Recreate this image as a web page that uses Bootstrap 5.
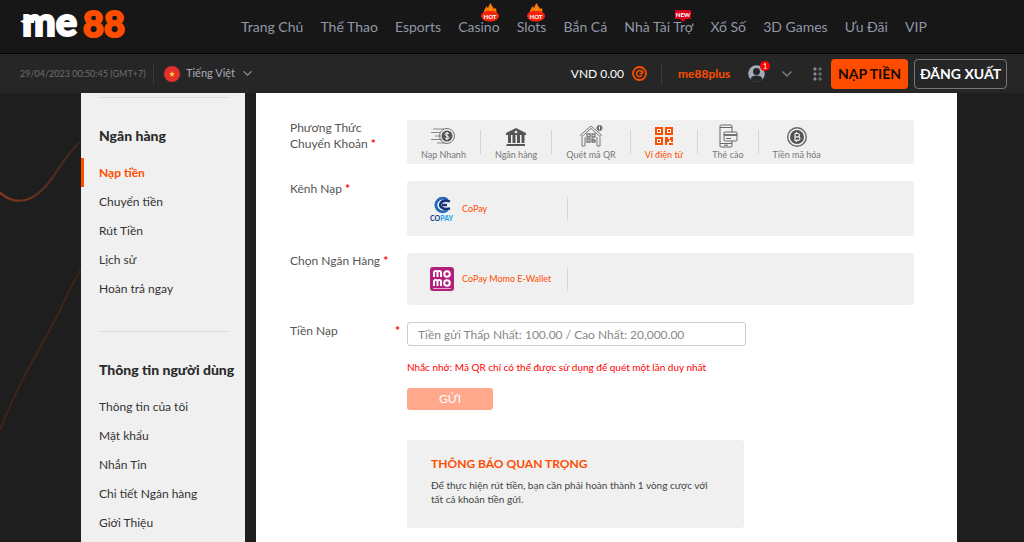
<!DOCTYPE html>
<html lang="vi">
<head>
<meta charset="utf-8">
<meta name="viewport" content="width=device-width, initial-scale=1">
<title>me88 – Nạp tiền</title>
<link href="https://cdn.jsdelivr.net/npm/bootstrap@5.3.0/dist/css/bootstrap.min.css" rel="stylesheet">
<style>
  :root { --brand: #ff4d00; --panel: #f0f0f0; --muted: #9296a6; }
  body { font-family: Lato, "Noto Sans", sans-serif; font-size: 13px; background: #1e1e1e; color: #444; }
  a { text-decoration: none; }
  svg { display: block; }

  .top-bar { background: #171717; border-bottom: 1px solid #000; height: 54px; }
  .brand-logo { width: 241px; padding-left: 20px; }
  .main-nav { padding-right: 97px; }
  .main-nav a { color: var(--muted); font-size: 14px; white-space: nowrap; position: relative; }
  .nav-flag { position: absolute; right: 1px; bottom: 15px; }

  .sub-bar { background: #262626; height: 39px; padding: 0 17px 0 20px; color: #fff; }
  .clock { font-size: 9px; color: #6f6f6f; width: 133px; white-space: nowrap; }
  .sub-bar .vr { height: 22px; color: #777; align-self: center; }
  .flag-vn { margin: 0 6px 0 2px; }
  .lang-select { width: 66px; padding: 0; font-size: 11px; color: #a9acb8; background-color: transparent; border: 0; background-position: right center; background-size: 9px;
    --bs-form-select-bg-img: url("data:image/svg+xml,%3csvg xmlns='http://www.w3.org/2000/svg' viewBox='0 0 16 16'%3e%3cpath fill='none' stroke='%238d909c' stroke-width='2' d='m1 4 7 7 7-7'/%3e%3c/svg%3e");
    background-image: var(--bs-form-select-bg-img); }
  .balance { font-size: 12px; }
  .balance-divider { margin: 0 16px 0 14px; }
  .user-link { color: var(--brand); font-size: 12px; font-weight: 700; width: 54px; }
  .avatar-badge { position: absolute; top: -4px; right: -5px; width: 10px; height: 10px; border-radius: 50%; background: #f00; color: #fff; font-size: 8px; line-height: 10px; text-align: center; }
  .icon-btn { padding: 0; border: 0; background: none; }
  .apps-btn { margin: 0 8px 0 20px; }
  .action-btn { height: 30px; padding: 0; font-size: 14px; font-weight: 700; border-radius: 4px; white-space: nowrap; }
  .action-deposit { width: 77px; margin-right: 6px; background: var(--brand); color: #1a0a00; }
  .action-logout { width: 93px; border: 1px solid #777; color: #fff; }

  .page-body { padding: 0 67px 0 81px; gap: 11px; position: relative; }
  .wave { position: absolute; left: 0; top: 0; }
  .side-menu { width: 164px; background: var(--panel); padding: 4px 0 5px; }
  .side-menu hr { margin: 0 16px 0 18px; color: #999; }
  .side-menu h2 { font-size: 14px; font-weight: 900; line-height: 29px; margin: 23px 0 8px 18px; color: #2b2b2b; white-space: nowrap; }
  .side-menu ul { margin-bottom: 28px; }
  .side-menu ul:last-child { margin-bottom: 0; }
  .side-menu li a { display: block; line-height: 29px; padding-left: 18px; color: #333; font-size: 12px; }
  .side-menu li a.active { color: var(--brand); font-weight: 700; border-left: 3px solid var(--brand); padding-left: 15px; }

  .deposit { background: #fff; padding: 27px 43px 13px 34px; }
  .field-row { display: grid; grid-template-columns: 117px minmax(0, 1fr); }
  .field-row + .field-row { margin-top: 17px; }
  .field-name { font-size: 12px; line-height: 16px; color: #555; }
  .req { color: #f00; font-weight: 700; }
  .choice-panel { background: var(--panel); border-radius: 3px; }
  .choice-panel .vr { height: 24px; color: #888; }
  .method-panel { height: 44px; }
  .method { padding: 0 14px; border: 0; background: none; font-size: 9px; line-height: 12px; color: #777; white-space: nowrap; }
  .method svg { height: 24px; margin: 0 auto 1px; }
  .method.active { color: var(--brand); }
  .channel { width: 160px; padding: 0 0 0 23px; border: 0; background: none; font-size: 9px; color: var(--brand); white-space: nowrap; }
  .channel-tall { height: 55px; }
  .channel-low { height: 52px; }
  .amount { width: 339px; max-width: 100%; height: 24px; padding: 0 10px; font-size: 12px; border-color: #ccc; border-radius: 3px; }
  .amount::placeholder { color: #888; }
  .amount-label { padding: 1px 7px 0 0; }
  .reminder { font-size: 10px; line-height: 14px; color: #f00; margin: 14px 0; }
  .send-btn { width: 86px; height: 22px; padding: 0; font-size: 12px; line-height: 20px; border: 0; border-radius: 3px; background: #ffa88c; color: #fff; }
  .notice { width: 337px; max-width: 100%; margin-top: 30px; background: var(--panel); border-radius: 3px; padding: 16px 24px 22px; font-size: 10px; line-height: 14px; }
  .notice h3 { font-size: 12px; line-height: 16px; font-weight: 700; color: var(--brand); margin-bottom: 6px; }
</style>
</head>
<body class="min-vh-100 d-flex flex-column">

<header>
  <div class="top-bar d-flex align-items-center">
    <a class="brand-logo flex-shrink-0" href="#" aria-label="me88">
      <svg width="120" height="52" viewBox="0 0 120 52">
        <path d="M0 20 Q6 19 9 14 H14 V22 H3 Z" fill="#fff"/>
        <text x="2" y="35" font-family="Lato" font-weight="900" font-size="40" fill="#fff" stroke="#fff" stroke-width="2">me</text>
        <text x="63" y="36" font-family="Lato" font-weight="900" font-size="36" fill="#ff4d00" stroke="#ff4d00" stroke-width="2">88</text>
      </svg>
    </a>
    <nav class="main-nav flex-fill d-flex justify-content-between">
      <a href="#">Trang Chủ</a>
      <a href="#">Thể Thao</a>
      <a href="#">Esports</a>
      <a href="#">Casino<svg class="nav-flag" width="18" height="19" viewBox="0 0 18 19"><path d="M3 11C2 7 5 6 5 3l2 2c1-2 1-4 3-5 0 3 3 4 3 6l2-1c1 3 0 5-1 7z" fill="#ff7a00"/><path d="M7 11c-1-3 2-3 2-6 2 2 3 4 2 6z" fill="#ffb22e"/><ellipse cx="9" cy="13" rx="9" ry="5.500" fill="#f4250c"/><text x="9" y="15.500" text-anchor="middle" font-family="Lato" font-weight="900" font-size="6" fill="#fff">HOT</text></svg></a>
      <a href="#">Slots<svg class="nav-flag" width="18" height="19" viewBox="0 0 18 19"><path d="M3 11C2 7 5 6 5 3l2 2c1-2 1-4 3-5 0 3 3 4 3 6l2-1c1 3 0 5-1 7z" fill="#ff7a00"/><path d="M7 11c-1-3 2-3 2-6 2 2 3 4 2 6z" fill="#ffb22e"/><ellipse cx="9" cy="13" rx="9" ry="5.500" fill="#f4250c"/><text x="9" y="15.500" text-anchor="middle" font-family="Lato" font-weight="900" font-size="6" fill="#fff">HOT</text></svg></a>
      <a href="#">Bắn Cá</a>
      <a href="#">Nhà Tài Trợ<svg class="nav-flag" width="18" height="12" viewBox="0 0 18 12"><path d="M1 0h16v9H12l-3 3-3-3H1z" fill="#d9001b"/><text x="9" y="7" text-anchor="middle" font-family="Lato" font-weight="900" font-size="6" fill="#fff">NEW</text></svg></a>
      <a href="#">Xổ Số</a>
      <a href="#">3D Games</a>
      <a href="#">Ưu Đãi</a>
      <a href="#">VIP</a>
    </nav>
  </div>

  <div class="sub-bar d-flex align-items-center">
    <span class="clock">29/04/2023 00:50:45 (GMT+7)</span>
    <span class="vr me-2"></span>
    <svg class="flag-vn" width="16" height="16" viewBox="0 0 16 16" aria-hidden="true"><circle cx="8" cy="8" r="8" fill="#e2302a"/><path d="M8 5l.8 2.200H11L9.200 8.600l.7 2.200L8 9.500l-1.900 1.300.7-2.200L5 7.200h2.200z" fill="#ffd93b"/></svg>
    <select class="form-select lang-select" aria-label="Ngôn ngữ"><option>Tiếng Việt</option></select>

    <div class="d-flex align-items-center ms-auto">
      <span class="balance">VND 0.00</span>
      <button class="icon-btn ms-2" aria-label="Làm mới số dư"><svg width="15" height="15" viewBox="0 0 15 15"><circle cx="7.500" cy="7.500" r="6.500" fill="none" stroke="#ff4d00" stroke-width="1.800"/><path d="M10 9.300A3 3 0 1 1 9.800 5.500M7.500 7.500H10.500V4.500" fill="none" stroke="#ff4d00" stroke-width="1.500"/></svg></button>
      <span class="vr balance-divider"></span>
      <a class="user-link" href="#">me88plus</a>
      <a class="position-relative ms-3" href="#" aria-label="Hồ sơ">
        <svg width="17" height="17" viewBox="0 0 17 17"><circle cx="8.500" cy="8.500" r="8.300" fill="#a3abbd"/><circle cx="8.500" cy="6.500" r="3.500" fill="#262626"/><path d="M2.500 14c1-3 3-3.500 6-3.500s5 .5 6 3.500c-3.500 3.500-8.500 3.500-12 0z" fill="#262626"/></svg>
        <span class="avatar-badge">1</span>
      </a>
      <button class="icon-btn ms-3" aria-label="Mở menu"><svg width="12" height="8" viewBox="0 0 12 8"><path d="M1.500 1.500 6 6l4.500-4.500" fill="none" stroke="#7c8190" stroke-width="1.400"/></svg></button>
      <button class="icon-btn apps-btn" aria-label="Ứng dụng"><svg width="10" height="16" viewBox="0 0 10 16" stroke="#7e8393"><g fill="#9aa0b0"><circle cx="2" cy="3" r="1.200"/><circle cx="2" cy="8" r="1.200"/><circle cx="2" cy="13" r="1.200"/></g><g fill="none"><circle cx="7" cy="3" r="1.200"/><circle cx="7" cy="8" r="1.200"/><circle cx="7" cy="13" r="1.200"/></g></svg></button>
      <button class="btn action-btn action-deposit">NẠP TIỀN</button>
      <button class="btn action-btn action-logout">ĐĂNG XUẤT</button>
    </div>
  </div>
</header>

<div class="page-body d-flex flex-fill">
  <svg class="wave" width="81" height="449" viewBox="0 0 81 449" fill="none" aria-hidden="true">
    <defs><linearGradient id="fade" x1="0" x2="1"><stop offset="0" stop-color="#8a3a1d"/><stop offset="1" stop-color="#3a241c"/></linearGradient></defs>
    <path d="M-1 99C14 112 29 110 43 96S66 60 81 48" stroke="url(#fade)" stroke-width="2"/>
    <path d="M81 176 Q70 195 60 217 C40 258 20 285 0 337" stroke="#40231a" stroke-width="2"/>
  </svg>

  <aside class="side-menu flex-shrink-0">
    <hr>
    <h2>Ngân hàng</h2>
    <ul class="list-unstyled">
      <li><a class="active" href="#">Nạp tiền</a></li>
      <li><a href="#">Chuyển tiền</a></li>
      <li><a href="#">Rút Tiền</a></li>
      <li><a href="#">Lịch sử</a></li>
      <li><a href="#">Hoàn trả ngay</a></li>
    </ul>
    <hr>
    <h2>Thông tin người dùng</h2>
    <ul class="list-unstyled">
      <li><a href="#">Thông tin của tôi</a></li>
      <li><a href="#">Mật khẩu</a></li>
      <li><a href="#">Nhắn Tin</a></li>
      <li><a href="#">Chi tiết Ngân hàng</a></li>
      <li><a href="#">Giới Thiệu</a></li>
    </ul>
  </aside>

  <main class="deposit flex-fill">
    <form>
      <div class="field-row">
        <div class="field-name" id="method-name">Phương Thức<br>Chuyển Khoản <span class="req">*</span></div>
        <div class="choice-panel method-panel d-flex align-items-center" role="group" aria-labelledby="method-name">
          <button type="button" class="method"><svg width="24" height="24" viewBox="0 0 24 24"><path d="M2 5h11M0 8.500h10M4 12h6M0 15.500h11M6 19h8" stroke="#888"/><circle cx="16" cy="12" r="7.500" fill="none" stroke="#777"/><circle cx="16" cy="12" r="5.500" fill="#555"/><path d="M18 10c-.5-1.500-4-1.500-4 .3 0 2 4 1.400 4 3.300 0 1.800-3.500 1.800-4 .2M16 8v8" fill="none" stroke="#fff"/></svg>Nạp Nhanh</button>
          <span class="vr align-self-center"></span>
          <button type="button" class="method"><svg width="24" height="24" viewBox="0 0 24 24" fill="#555"><path d="M12 4 22 9v2H2V9zM3 20h18v2H2zM4 11h3v8H4zm4.500 0h3v8h-3zm4.500 0h3v8h-3zm4.500 0h3v8h-3z"/><circle cx="12" cy="8" r="1.300" fill="#f0f0f0"/></svg>Ngân hàng</button>
          <span class="vr align-self-center"></span>
          <button type="button" class="method"><svg width="24" height="24" viewBox="0 0 24 24" fill="none" stroke="#777"><path d="M1.500 11 12 2l10.500 9-1.500 1.500-9-8-9 8zM3 13v9h3v-9M18 13v9h3v-9"/><path d="M8 10h3v3H8zm5 0h3v3h-3zm-5 5h3v3H8zm5 0h1v1h2v2h-3z" stroke-width="1.300"/><circle cx="20.500" cy="4" r="2.600" fill="#666"/><path d="M20.500 2.500v3" stroke="#fff"/></svg>Quét mã QR</button>
          <span class="vr align-self-center"></span>
          <button type="button" class="method active"><svg width="24" height="24" viewBox="0 0 24 24"><g fill="none" stroke="#ff4d00" stroke-width="2"><path d="M4 4h6v6H4zM14 4h6v6h-6zM4 14h6v6H4z"/></g><path d="M6 6h2v2H6zm10 0h2v2h-2zM6 16h2v2H6zM13 13h3v2h2v-2h3v5h-2v-2h-2v2h-2v3h-2zM17 19h4v2h-4z" fill="#ff4d00"/></svg>Ví điện tử</button>
          <span class="vr align-self-center"></span>
          <button type="button" class="method"><svg width="24" height="24" viewBox="0 0 24 24" fill="none" stroke="#666"><path d="M16 8V2Q16 1 15 1H5Q4 1 4 2V22Q4 23 5 23H15Q16 23 16 22V17M4 19.500h12M4 3.500h12M8 21.200h4"/><rect x="8" y="8" width="13" height="9" rx="1" fill="#f0f0f0"/><path d="M8 11h13" stroke-width="1.800"/><path d="M10 14.500h5"/></svg>Thẻ cào</button>
          <span class="vr align-self-center"></span>
          <button type="button" class="method"><svg width="24" height="24" viewBox="0 0 24 24"><circle cx="12" cy="13" r="9.300" fill="none" stroke="#666" stroke-width="1.400"/><circle cx="12" cy="13" r="7" fill="#555"/><path d="M10 9.500h2.800a1.600 1.600 0 0 1 0 3.300H10m0 0h3.200a1.800 1.800 0 0 1 0 3.600H10zM10 9.500v7M11.500 8v1.500m0 7V18" fill="none" stroke="#f0f0f0" stroke-width="1.200"/></svg>Tiền mã hóa</button>
        </div>
      </div>

      <div class="field-row">
        <div class="field-name" id="channel-name">Kênh Nạp <span class="req">*</span></div>
        <div class="choice-panel d-flex align-items-center" role="group" aria-labelledby="channel-name">
          <button type="button" class="channel channel-tall d-flex align-items-center gap-2">
            <svg width="24" height="26" viewBox="0 0 24 26"><path d="M17.500 4.200A6.800 6.800 0 1 0 17.500 13.800" fill="none" stroke="#2468b8" stroke-width="2.800"/><path d="M20 5.500C17.500 4.500 12 4 10.500 7.500S13 14 20 12.500M12 9h5" fill="none" stroke="#17347d" stroke-width="2.400"/><text x="0" y="25" font-family="Lato" font-weight="900" font-size="7" fill="#17478f">CO<tspan fill="#2aa5df">PAY</tspan></text></svg>
            CoPay
          </button>
          <span class="vr align-self-center"></span>
        </div>
      </div>

      <div class="field-row">
        <div class="field-name" id="bank-name">Chọn Ngân Hàng <span class="req">*</span></div>
        <div class="choice-panel d-flex align-items-center" role="group" aria-labelledby="bank-name">
          <button type="button" class="channel channel-low d-flex align-items-center gap-2">
            <svg width="24" height="24" viewBox="0 0 24 24"><rect width="24" height="24" rx="3" fill="#b0207c"/><g fill="none" stroke="#fff" stroke-width="2"><path d="M4 10V5.500q0-1.500 1.800-1.500t1.700 1.500V10m0-4.500Q7.500 4 9.300 4T11 5.500V10M4 19v-4.500q0-1.500 1.800-1.500t1.700 1.500V19m0-4.500q0-1.500 1.800-1.500t1.700 1.500V19"/><circle cx="17" cy="7" r="2.800"/><circle cx="17" cy="16" r="2.800"/></g><path d="M3 21.500h18" stroke="#e7a6cf"/></svg>
            CoPay Momo E-Wallet
          </button>
          <span class="vr align-self-center"></span>
        </div>
      </div>

      <div class="field-row">
        <label class="field-name amount-label d-flex justify-content-between" for="amount">Tiền Nạp <span class="req">*</span></label>
        <div>
          <input id="amount" class="form-control amount" type="text" placeholder="Tiền gửi Thấp Nhất: 100.00 / Cao Nhất: 20,000.00">
          <p class="reminder">Nhắc nhở: Mã QR chỉ có thể được sử dụng để quét một lần duy nhất</p>
          <button type="submit" class="send-btn d-block">GỬI</button>
          <section class="notice">
            <h3>THÔNG BÁO QUAN TRỌNG</h3>
            <p class="mb-0">Để thực hiện rút tiền, bạn cần phải hoàn thành 1 vòng cược với tất cả khoản tiền gửi.</p>
          </section>
        </div>
      </div>
    </form>
  </main>
</div>

<script src="https://cdn.jsdelivr.net/npm/bootstrap@5.3.0/dist/js/bootstrap.bundle.min.js"></script>
</body>
</html>
